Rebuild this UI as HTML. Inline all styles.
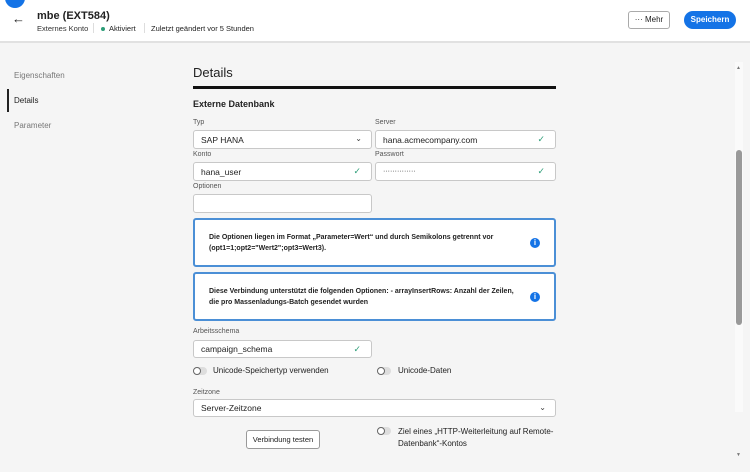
<!DOCTYPE html><html><head><style>
*{box-sizing:border-box;margin:0;padding:0}
body{width:750px;height:472px;overflow:hidden;background:#f5f5f5;font-family:"Liberation Sans",sans-serif;color:#222;position:relative}
.a{position:absolute}
.hdr{left:0;top:0;width:750px;height:43px;background:#fff;border-bottom:2px solid #e1e1e1}
.lbl{font-size:7px;color:#555}
.fld{background:#fff;border:1px solid #c8c8c8;border-radius:3px;font-size:8.5px;padding-left:7px;display:flex;align-items:center}
.ck{position:absolute;right:10px;top:3px;color:#2d9d78;font-size:9px}
.cv{position:absolute;right:9px;top:3px;font-size:8px;color:#444}
.box{left:193px;width:363px;border:2px solid #4b8fd6;border-radius:3px;background:#fff;font-size:7px;font-weight:bold;padding:0 0 0 14px;display:flex;align-items:center;line-height:11px;white-space:nowrap}
.ic{position:absolute;right:14px;width:10px;height:10px;border-radius:50%;background:#1473e6;color:#fff;font-size:8px;text-align:center;line-height:10px;font-weight:bold}
.tg{width:14px;height:8px;border-radius:4px;background:#ddd}
.tg:before{content:"";position:absolute;left:0;top:0;width:8px;height:8px;box-sizing:border-box;border-radius:50%;background:#fff;border:1px solid #666}
.tt{font-size:8px}
</style></head><body>
<div class="a hdr"></div>
<div class="a" style="left:5px;top:-12px;width:20px;height:20px;border-radius:50%;background:#1473e6"></div>
<div class="a" style="left:12px;top:11px;font-size:13px">&#8592;</div>
<div class="a" style="left:37px;top:10px;font-size:11px;font-weight:bold">mbe (EXT584)</div>
<div class="a" style="left:37px;top:24px;font-size:7.5px;color:#333">Externes Konto</div>
<div class="a" style="left:93px;top:23px;width:1px;height:10px;background:#ddd"></div>
<div class="a" style="left:101px;top:27px;width:4px;height:4px;border-radius:50%;background:#2d9d78"></div>
<div class="a" style="left:109px;top:24px;font-size:7.5px">Aktiviert</div>
<div class="a" style="left:144px;top:23px;width:1px;height:10px;background:#ddd"></div>
<div class="a" style="left:151px;top:24px;font-size:7.5px">Zuletzt geändert vor 5 Stunden</div>
<div class="a" style="left:628px;top:11px;width:42px;height:18px;border:1px solid #aaa;border-radius:3px;background:#fff;font-size:8px;text-align:center;line-height:16px">··· Mehr</div>
<div class="a" style="left:684px;top:11px;width:52px;height:18px;border-radius:9px;background:#1473e6;color:#fff;font-size:8px;font-weight:bold;text-align:center;line-height:18px">Speichern</div>
<div class="a" style="left:14px;top:71px;font-size:8px;color:#777">Eigenschaften</div>
<div class="a" style="left:7px;top:89px;width:2px;height:23px;background:#222"></div>
<div class="a" style="left:14px;top:96px;font-size:8px;color:#222">Details</div>
<div class="a" style="left:14px;top:121px;font-size:8px;color:#777">Parameter</div>
<div class="a" style="left:193px;top:65px;font-size:13px">Details</div>
<div class="a" style="left:193px;top:86px;width:363px;height:3px;background:#111"></div>
<div class="a" style="left:193px;top:99px;font-size:9px;font-weight:bold">Externe Datenbank</div>
<div class="a lbl" style="left:193px;top:119px">Typ</div>
<div class="a lbl" style="left:375px;top:119px">Server</div>
<div class="a fld" style="left:193px;top:130px;width:179px;height:19px">SAP HANA<span class="cv">&#8964;</span></div>
<div class="a fld" style="left:375px;top:130px;width:181px;height:19px">hana.acmecompany.com<span class="ck">✓</span></div>
<div class="a lbl" style="left:193px;top:151px">Konto</div>
<div class="a lbl" style="left:375px;top:151px">Passwort</div>
<div class="a fld" style="left:193px;top:162px;width:179px;height:19px">hana_user<span class="ck">✓</span></div>
<div class="a fld" style="left:375px;top:162px;width:181px;height:19px;font-size:7px">··············<span class="ck">✓</span></div>
<div class="a lbl" style="left:193px;top:183px">Optionen</div>
<div class="a fld" style="left:193px;top:194px;width:179px;height:19px"></div>
<div class="a box" style="top:218px;height:49px"><div>Die Optionen liegen im Format „Parameter=Wert“ und durch Semikolons getrennt vor<br>(opt1=1;opt2="Wert2";opt3=Wert3).</div><span class="ic">i</span></div>
<div class="a box" style="top:272px;height:49px"><div>Diese Verbindung unterstützt die folgenden Optionen: - arrayInsertRows: Anzahl der Zeilen,<br>die pro Massenladungs-Batch gesendet wurden</div><span class="ic">i</span></div>
<div class="a lbl" style="left:193px;top:328px">Arbeitsschema</div>
<div class="a fld" style="left:193px;top:340px;width:179px;height:18px">campaign_schema<span class="ck">✓</span></div>
<div class="a tg" style="left:193px;top:367px"></div>
<div class="a tt" style="left:213px;top:366px">Unicode-Speichertyp verwenden</div>
<div class="a tg" style="left:377px;top:367px"></div>
<div class="a tt" style="left:398px;top:366px">Unicode-Daten</div>
<div class="a lbl" style="left:193px;top:389px">Zeitzone</div>
<div class="a fld" style="left:193px;top:399px;width:363px;height:18px">Server-Zeitzone<span class="cv">&#8964;</span></div>
<div class="a" style="left:246px;top:430px;width:74px;height:19px;border:1px solid #999;border-radius:3px;background:#fff;font-size:7.5px;text-align:center;line-height:17px">Verbindung testen</div>
<div class="a tg" style="left:377px;top:427px"></div>
<div class="a tt" style="left:398px;top:426px;line-height:12px">Ziel eines „HTTP-Weiterleitung auf Remote-<br>Datenbank“-Kontos</div>
<div class="a" style="left:735px;top:62px;width:8px;height:350px;background:#fafafa"></div>
<div class="a" style="left:736px;top:150px;width:6px;height:175px;background:#999;border-radius:3px"></div>
<div class="a" style="left:736px;top:65px;font-size:5px;color:#777">▲</div>
<div class="a" style="left:736px;top:452px;font-size:5px;color:#777">▼</div>
</body></html>
